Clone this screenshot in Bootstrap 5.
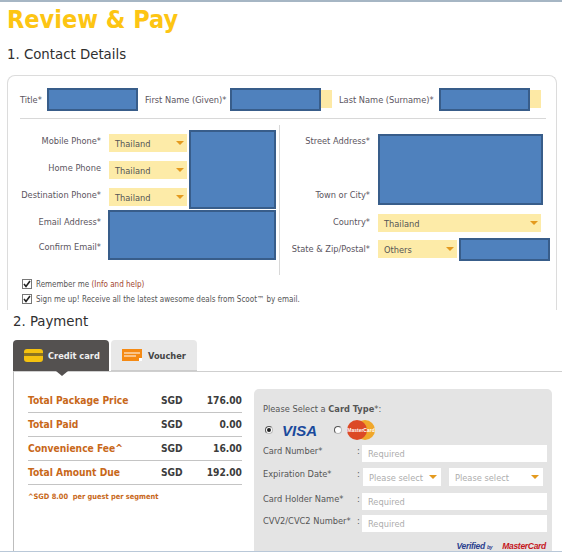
<!DOCTYPE html>
<html lang="en">
<head>
  <meta charset="UTF-8">
  <meta name="viewport" content="width=device-width, initial-scale=1.0">
  <title>Review &amp; Pay</title>
  <link href="https://cdn.jsdelivr.net/npm/bootstrap@5.3.0/dist/css/bootstrap.min.css" rel="stylesheet">
  <style>
    html, body { height: 552px; overflow: hidden; }
    body { background: #fff; font-family: "DejaVu Sans Condensed", "DejaVu Sans", sans-serif; font-size: 9.2px; color: #5b5560; line-height: 11px; border-top: 2px solid #a6b6c4; }
    .pay-title { font-size: 25px; font-weight: 700; color: #fdc513; margin: 3px 0 0 7px; line-height: 30px; }
    .sec-title { font-size: 14.8px; font-weight: 400; color: #2f2f2f; margin: 0; line-height: 20px; }
    .first-sec { margin: 9px 0 0 7px; }
    .contact-box { height: 235px; margin: 11px 5px 0 7px; padding: 12px 5px 0 12px; border: 1px solid #dcdcdc; border-bottom: 0; border-radius: 8px 8px 0 0; }
    .name-row { height: 31px; border-bottom: 1px solid #d8d8d8; margin-right: 5px; white-space: nowrap; }
    .blk { background: #4f81bd; border: 2px solid #385d8a; }
    .name-blk { width: 91px; height: 23px; flex: none; }
    .sliver { width: 11px; height: 18px; margin-top: 2px; background: #fde9a5; flex: none; }
    .name-lbl { padding-top: 6px; flex: none; }
    .lbl-title { width: 27px; }
    .lbl-first { width: 85px; margin-left: 7px; }
    .lbl-last { width: 100px; margin-left: 7px; }
    .fields { display: flex; height: 150px; margin-top: 6px; }
    .fields-l { width: 260px; height: 150px; border-right: 1px solid #d8d8d8; display: grid; grid-template-columns: 89px 80px 87px; grid-template-rows: 27px 27px 26px 25px 25px; padding-top: 5px; align-content: start; }
    .fields-r { flex: 1; display: grid; grid-template-columns: 98px 81px 91px; grid-template-rows: 27px 27px 27px 26px 26px; padding-top: 5px; align-content: start; }
    .lbl { text-align: right; padding: 5px 8px 0 0; white-space: nowrap; }
    .lbl-low { padding-top: 6px; }
    .ysel { position: relative; height: 18px; background: #fdeba8; color: #555; line-height: 19px; padding-left: 6px; }
    .ysel::after { content: ""; position: absolute; right: 3px; top: 7px; border: 4px solid transparent; border-top: 4px solid #e49a1e; border-bottom: 0; }
    .fields-l .ysel { width: 78px; margin-top: 4px; }
    .phone-blk { grid-column: 3; grid-row: 1 / span 3; height: 79px; }
    .mail-blk { grid-column: 2 / span 2; grid-row: 4 / span 2; height: 50px; margin-left: -1px; }
    .street-blk { grid-column: 2 / span 2; grid-row: 1 / span 3; width: 165px; height: 71px; margin-top: 4px; }
    .row-1 { grid-row: 1; } .row-3 { grid-row: 3; } .row-4 { grid-row: 4; } .row-5 { grid-row: 5; }
    .country-sel { grid-column: 2 / span 2; grid-row: 4; width: 163px; margin-top: 3px; }
    .state-sel { grid-column: 2; grid-row: 5; width: 79px; margin-top: 3px; }
    .zip-blk { grid-column: 3; grid-row: 5; width: 91px; height: 23px; margin-top: 1px; }
    .ws { background: #fff; color: #adadad; }
    .check-line { display: flex; align-items: center; gap: 4px; height: 10px; margin-left: 2px; font-size: 8px; color: #555; white-space: nowrap; }
    .check-one { margin-top: 4px; }
    .check-two { margin-top: 5px; }
    .info-link { color: #a2452e; }
    .pay-wrap { background: #fff; height: 242px; padding: 1px 0 0 13px; overflow: hidden; border-bottom: 1px solid #b9c8d8; }
    .pay-tabs { display: flex; gap: 2px; margin-top: 9px; height: 31px; }
    .ptab { display: flex; align-items: center; font-weight: 700; font-size: 9.2px; border-radius: 4px 4px 0 0; position: relative; padding-left: 11px; }
    .ptab-on { width: 96px; gap: 5px; background: #545150; color: #f0f0f0; }
    .ptab-on::after { content: ""; position: absolute; left: 43px; bottom: -5px; border: 6px solid transparent; border-top: 5px solid #545150; border-bottom: 0; }
    .ptab-off { width: 86px; gap: 6px; background: #e8e8e8; color: #444; border-bottom: 1px solid #ccc; }
    .pay-panel { display: flex; height: 190px; border-left: 1px solid #bdbdbd; border-top: 1px solid #cfcfcf; padding: 17px 0 0 14px; }
    .tot-col { width: 214px; flex: none; }
    .tot-row { display: flex; align-items: center; height: 24px; border-bottom: 1px solid #c4c4c4; font-weight: 700; font-size: 10.2px; color: #3c3c3c; }
    .tot-name { width: 133px; color: #c8681a; }
    .tot-cur { width: 30px; }
    .tot-amt { flex: 1; text-align: right; }
    .foot-note { margin-top: 6px; font-size: 7.4px; font-weight: 700; color: #c8681a; white-space: nowrap; }
    .card-panel { width: 298px; flex: none; margin: 0 0 0 12px; height: 162px; background: #e4e4e4; border-radius: 5px 5px 0 0; padding: 14px 5px 0 9px; color: #555; overflow: hidden; }
    .type-row { display: flex; align-items: center; height: 20px; margin: 6px 0 5px; }
    .radio-dot { width: 8px; height: 8px; border-radius: 50%; border: 1px solid #bbb; border-top-color: #555; border-left-color: #555; background: #fff; flex: none; position: relative; }
    .radio-dot.on { margin-left: 2px; }
    .radio-dot.on::after { content: ""; position: absolute; inset: 1px; border-radius: 50%; background: #222; }
    .visa-txt { font-family: "Liberation Sans", sans-serif; font-size: 15px; font-weight: 700; font-style: italic; color: #1a4a9c; margin-left: 9px; width: 52px; }
    .mc-logo { margin-left: 5px; }
    .f-row { display: flex; align-items: flex-start; white-space: nowrap; }
    .rh-23 { height: 23px; } .rh-25 { height: 25px; } .rh-22 { height: 22px; }
    .f-lbl { width: 94px; }
    .f-col { width: 5px; }
    .f-in { flex: 1; height: 17px; background: #fff; color: #adadad; line-height: 18px; padding-left: 6px; }
    .f-row .ysel { margin-left: 1px; width: 78px; }
    .f-row .ysel-wide { margin-left: 8px; width: 94px; }
    .f-row .ysel.ws::after { right: 4px; }
    .seal-row { display: flex; justify-content: flex-end; gap: 10px; margin-top: 4px; padding-right: 1px; font-family: "Liberation Sans", sans-serif; font-size: 8.5px; font-weight: 700; font-style: italic; letter-spacing: -.3px; }
    .seal-visa { color: #2a3f8f; }
    .seal-visa small { font-size: 5px; }
    .seal-mc { color: #c4161c; }
  </style>
</head>
<body>
  <h1 class="pay-title">Review &amp; Pay</h1>
  <h2 class="sec-title first-sec">1. Contact Details</h2>

  <div class="contact-box">
    <div class="name-row d-flex align-items-start">
      <span class="name-lbl lbl-title">Title*</span>
      <div class="blk name-blk"></div>
      <span class="name-lbl lbl-first">First Name (Given)*</span>
      <div class="blk name-blk"></div>
      <div class="sliver"></div>
      <span class="name-lbl lbl-last">Last Name (Surname)*</span>
      <div class="blk name-blk"></div>
      <div class="sliver"></div>
    </div>

    <div class="fields">
      <div class="fields-l">
        <div class="lbl">Mobile Phone*</div>
        <div class="ysel">Thailand</div>
        <div class="blk phone-blk"></div>
        <div class="lbl">Home Phone</div>
        <div class="ysel">Thailand</div>
        <div class="lbl">Destination Phone*</div>
        <div class="ysel">Thailand</div>
        <div class="lbl lbl-low row-4">Email Address*</div>
        <div class="blk mail-blk"></div>
        <div class="lbl lbl-low row-5">Confirm Email*</div>
      </div>
      <div class="fields-r">
        <div class="lbl row-1">Street Address*</div>
        <div class="blk street-blk"></div>
        <div class="lbl row-3">Town or City*</div>
        <div class="lbl row-4">Country*</div>
        <div class="ysel country-sel">Thailand</div>
        <div class="lbl lbl-low row-5">State &amp; Zip/Postal*</div>
        <div class="ysel state-sel">Others</div>
        <div class="blk zip-blk"></div>
      </div>
    </div>
    <div class="check-line check-one">
      <svg width="10" height="10" viewBox="0 0 10 10"><rect x=".5" y=".5" width="9" height="9" fill="#fff" stroke="#777"/><path d="M2 5l2 2.5L8 2" fill="none" stroke="#222" stroke-width="1.6"/></svg>
      <span>Remember me <span class="info-link">(Info and help)</span></span>
    </div>
    <div class="check-line check-two">
      <svg width="10" height="10" viewBox="0 0 10 10"><rect x=".5" y=".5" width="9" height="9" fill="#fff" stroke="#777"/><path d="M2 5l2 2.5L8 2" fill="none" stroke="#222" stroke-width="1.6"/></svg>
      <span>Sign me up! Receive all the latest awesome deals from Scoot™ by email.</span>
    </div>
  </div>

  <div class="pay-wrap">
    <h2 class="sec-title">2. Payment</h2>
    <div class="pay-tabs">
      <div class="ptab ptab-on">
        <svg width="19" height="13" viewBox="0 0 19 13"><rect width="19" height="13" rx="3" fill="#f5c20f"/><rect y="4" width="19" height="3" fill="#8c7420"/></svg>
        Credit card
      </div>
      <div class="ptab ptab-off">
        <svg width="20" height="12" viewBox="0 0 20 12"><rect width="20" height="12" fill="#f58a14"/><path d="M2 4h16M2 7h12" stroke="#fff" fill="none"/><path d="M17 9h3v3h-3z" fill="#fff"/></svg>
        Voucher
      </div>
    </div>
    <div class="pay-panel">
      <div class="tot-col">
        <div class="tot-row"><span class="tot-name">Total Package Price</span><span class="tot-cur">SGD</span><span class="tot-amt">176.00</span></div>
        <div class="tot-row"><span class="tot-name">Total Paid</span><span class="tot-cur">SGD</span><span class="tot-amt">0.00</span></div>
        <div class="tot-row"><span class="tot-name">Convenience Fee^</span><span class="tot-cur">SGD</span><span class="tot-amt">16.00</span></div>
        <div class="tot-row"><span class="tot-name">Total Amount Due</span><span class="tot-cur">SGD</span><span class="tot-amt">192.00</span></div>
        <div class="foot-note">^SGD 8.00&nbsp; per guest per segment</div>
      </div>
      <div class="card-panel">
        <div>Please Select a <b>Card Type</b>*:</div>
        <div class="type-row">
          <span class="radio-dot on"></span>
          <span class="visa-txt">VISA</span>
          <span class="radio-dot"></span>
          <svg class="mc-logo" width="28" height="20" viewBox="0 0 28 20"><circle cx="18" cy="10" r="10" fill="#f0a72a"/><circle cx="10" cy="10" r="10" fill="#dc4a26"/><text x="14" y="12" font-size="5" font-weight="700" fill="#fff" text-anchor="middle" font-family="Liberation Sans">MasterCard</text></svg>
        </div>
        <div class="f-row rh-23"><span class="f-lbl">Card Number*</span><span class="f-col">:</span><div class="f-in">Required</div></div>
        <div class="f-row rh-25"><span class="f-lbl">Expiration Date*</span><span class="f-col">:</span><div class="ysel ws">Please select</div><div class="ysel ws ysel-wide">Please select</div></div>
        <div class="f-row rh-22"><span class="f-lbl">Card Holder Name*</span><span class="f-col">:</span><div class="f-in">Required</div></div>
        <div class="f-row rh-22"><span class="f-lbl">CVV2/CVC2 Number*</span><span class="f-col">:</span><div class="f-in">Required</div></div>
        <div class="seal-row"><span class="seal-visa">Verified <small>by</small></span><span class="seal-mc">MasterCard</span></div>
      </div>
    </div>
  </div>
  <script src="https://cdn.jsdelivr.net/npm/bootstrap@5.3.0/dist/js/bootstrap.bundle.min.js"></script>
</body>
</html>
